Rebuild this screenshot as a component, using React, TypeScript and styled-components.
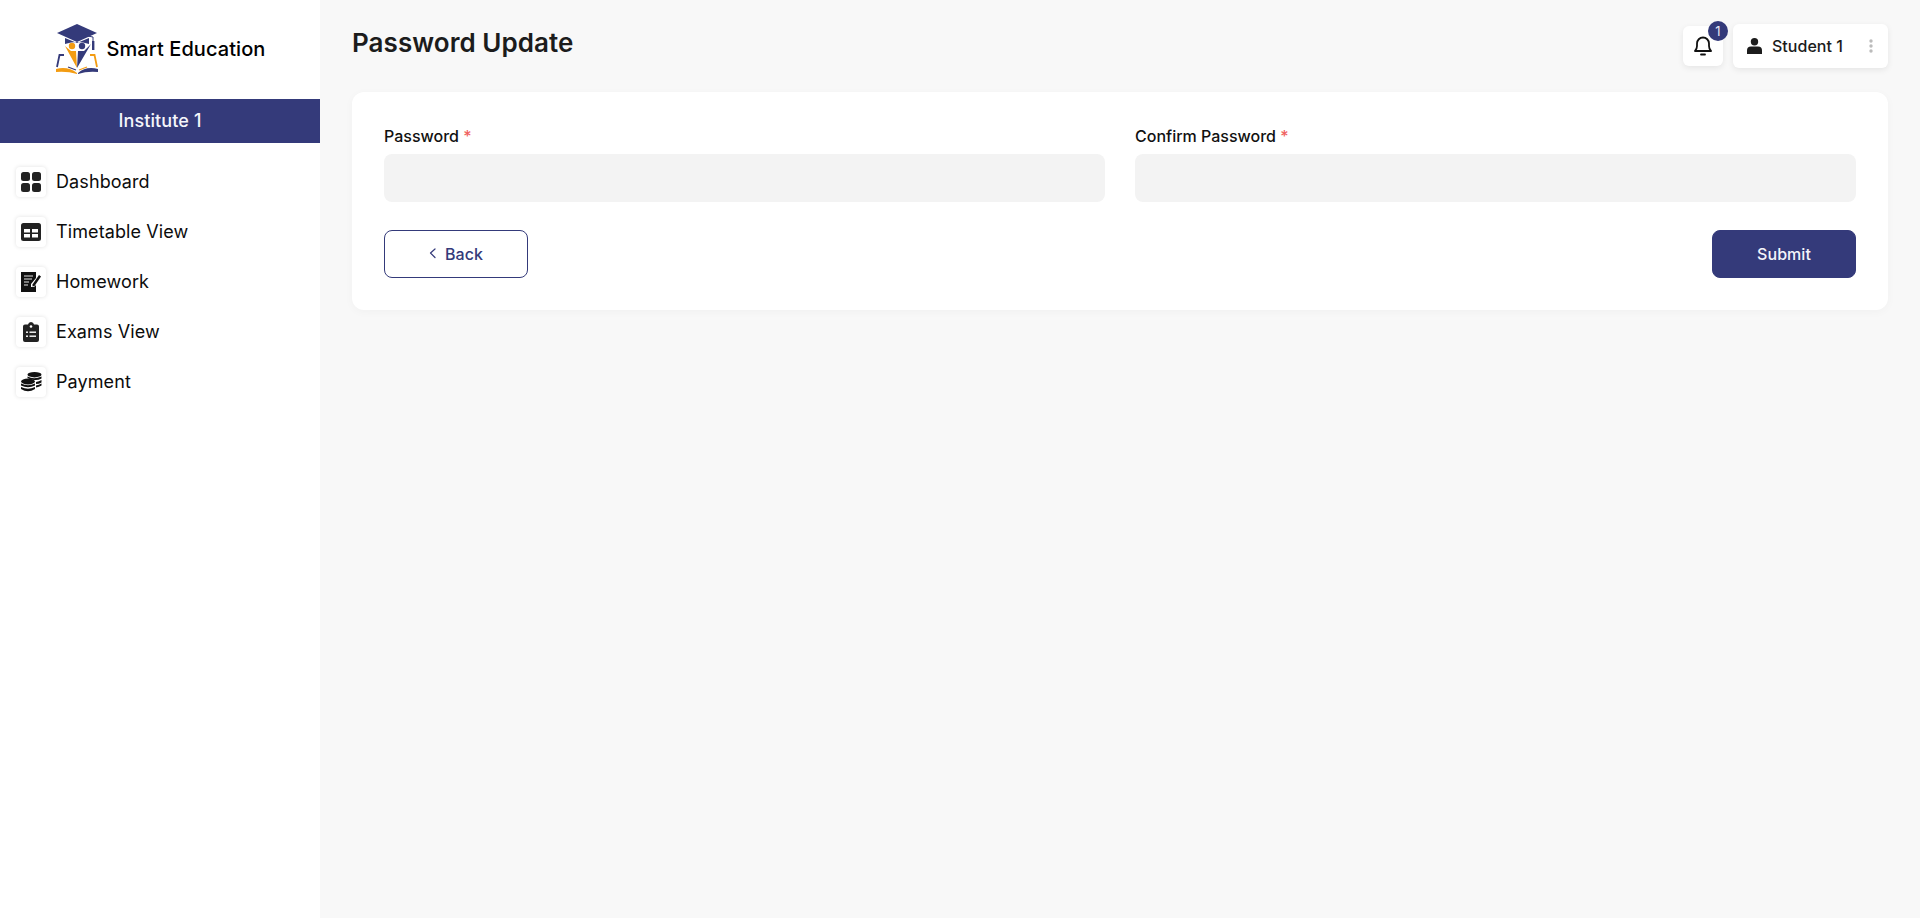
import React from "react";
import styled, { createGlobalStyle } from "styled-components";

const Global = createGlobalStyle`
  html, body { margin: 0; padding: 0; height: 100%; background: #f8f8f8; }
  * { box-sizing: border-box; }
  body { font-family: Inter, "Liberation Sans", sans-serif; color: #000; }
`;

const Shell = styled.div`
  display: flex;
  width: 1920px;
  height: 918px;
  overflow: hidden;
`;
const Sidebar = styled.aside`
  width: 320px;
  flex: none;
  background: #fff;
  display: flex;
  flex-direction: column;
`;
const Brand = styled.div`
  height: 99px;
  display: flex;
  align-items: center;
  justify-content: center;
  gap: 7px;
  padding-left: 1px;
`;
const BrandName = styled.span`
  font-size: 20px;
  font-weight: 450;
  letter-spacing: 0.08px;
  margin-top: -2px;
`;
const Institute = styled.div`
  height: 44px;
  background: #343a7a;
  color: #f4f5fb;
  font-size: 18px;
  font-weight: 450;
  letter-spacing: 0.12px;
  padding-bottom: 2px;
  display: flex;
  align-items: center;
  justify-content: center;
`;
const Menu = styled.nav`
  display: flex;
  flex-direction: column;
  gap: 20px;
  padding: 24px 16px 0;
`;
const MenuItem = styled.a`
  display: flex;
  align-items: center;
  gap: 10px;
  height: 30px;
  font-size: 18px;
  font-weight: 400;
  letter-spacing: 0.1px;
  color: #0c0c0c;
`;
const MenuLabel = styled.span`
  margin-top: -2px;
`;
const IconBox = styled.span`
  width: 30px;
  height: 30px;
  border-radius: 4px;
  background: #fff;
  box-shadow: 0 0 4px rgba(0, 0, 0, 0.12);
  display: flex;
  align-items: center;
  justify-content: center;
  flex: none;
`;
const Main = styled.main`
  flex: 1;
  min-width: 0;
  padding: 24px 32px 0;
  display: flex;
  flex-direction: column;
`;
const TopBar = styled.header`
  height: 44px;
  display: flex;
  align-items: center;
  justify-content: space-between;
  margin-bottom: 24px;
`;
const Title = styled.h1`
  margin: -7px 0 0;
  font-size: 26px;
  font-weight: 600;
  letter-spacing: 0.06px;
  color: #1c1c1c;
`;
const TopActions = styled.div`
  display: flex;
  align-items: center;
  gap: 10px;
`;
const BellBox = styled.div`
  position: relative;
  width: 40px;
  height: 40px;
  background: #fff;
  border-radius: 6px;
  box-shadow: 0 2px 6px rgba(0, 0, 0, 0.08);
  display: flex;
  align-items: center;
  justify-content: center;
`;
const Badge = styled.span`
  position: absolute;
  top: -5px;
  right: -5px;
  width: 20px;
  height: 20px;
  border-radius: 50%;
  background: #343a7a;
  color: #e8e9f5;
  font-size: 13px;
  display: flex;
  align-items: center;
  justify-content: center;
`;
const UserBox = styled.div`
  width: 155px;
  height: 44px;
  background: #fff;
  border-radius: 6px;
  box-shadow: 0 2px 6px rgba(0, 0, 0, 0.08);
  display: flex;
  align-items: center;
  padding: 0 15px 0 14px;
  gap: 10px;
`;
const UserName = styled.span`
  font-size: 16px;
  font-weight: 500;
  letter-spacing: 0.02px;
  color: #1c1c1c;
  flex: 1;
`;
const Card = styled.section`
  height: 218px;
  background: #fff;
  border-radius: 12px;
  box-shadow: 0 2px 10px rgba(0, 0, 0, 0.03);
  padding: 32px;
  display: flex;
  flex-direction: column;
`;
const Fields = styled.div`
  display: grid;
  grid-template-columns: 1fr 1fr;
  gap: 30px;
`;
const Field = styled.div`
  display: flex;
  flex-direction: column;
  gap: 8px;
`;
const Label = styled.label`
  font-size: 16px;
  font-weight: 450;
  line-height: 20px;
  padding-top: 2px;
  color: #111;
`;
const Req = styled.span`
  color: #f0625f;
`;
const Input = styled.input`
  height: 48px;
  border: 0;
  border-radius: 8px;
  background: #f3f3f3;
  outline: none;
  width: 100%;
`;
const Actions = styled.div`
  margin-top: 28px;
  display: flex;
  justify-content: space-between;
`;
const Button = styled.button<{ $primary?: boolean }>`
  width: 144px;
  height: 48px;
  border-radius: 8px;
  border: 1px solid #343a7a;
  background: ${(p) => (p.$primary ? "#343a7a" : "#fff")};
  color: ${(p) => (p.$primary ? "#f4f5fb" : "#343a7a")};
  font-family: inherit;
  font-size: 16px;
  font-weight: 450;
  letter-spacing: 0.05px;
  display: flex;
  align-items: center;
  justify-content: center;
  gap: 8px;
  padding: 0;
`;

const Logo = () => (
  <svg width="44" height="52" viewBox="0 0 44 52">
    <path d="M21 0 L41 9 L21 18 L1 9 Z" fill="#343a7a" />
    <path d="M9 14 L9 20 Q21 16 33 20 L33 14 L21 19 Z" fill="#343a7a" />
    <path d="M26 11 L37 13 L37 23" fill="none" stroke="#343a7a" strokeWidth="1" />
    <rect x="36" y="17" width="2.4" height="9" fill="#343a7a" />
    <circle cx="16" cy="22" r="3.200" fill="#f39c12" />
    <circle cx="26" cy="22" r="3.200" fill="#343a7a" />
    <path d="M9 22 L15 27 L20 27 L21 44 Z" fill="#f39c12" />
    <path d="M35 20 L28 27 L22 27 L21 44 Z" fill="#343a7a" />
    <path d="M8 31 H3.500 L1 43" fill="none" stroke="#343a7a" strokeWidth="1.800" />
    <path d="M34 31 H38.500 L41 43" fill="none" stroke="#f39c12" strokeWidth="1.800" />
    <path d="M0 45 Q12 42 21 49 L21 50 Q11 47 0 48 Z" fill="#f39c12" />
    <path d="M42 45 Q30 42 22 49 L22 50 Q31 47 42 48 Z" fill="#343a7a" />
    <path d="M20 46 L12 43" stroke="#343a7a" strokeWidth="1.200" />
    <path d="M23 46 L31 43" stroke="#f39c12" strokeWidth="1.200" />
  </svg>
);

const DashIcon = () => (
  <svg width="20" height="20" viewBox="0 0 20 20" fill="#222">
    <rect x="0" y="0" width="9" height="9" rx="2.500" />
    <rect x="11" y="0" width="9" height="9" rx="2.500" />
    <rect x="0" y="11" width="9" height="9" rx="2.500" />
    <rect x="11" y="11" width="9" height="9" rx="2.500" />
  </svg>
);
const TableIcon = () => (
  <svg width="20" height="18" viewBox="0 0 20 18">
    <rect width="20" height="18" rx="2.500" fill="#222" />
    <rect x="3" y="6" width="6" height="3.500" fill="#fff" />
    <rect x="11" y="6" width="6" height="3.500" fill="#fff" />
    <rect x="3" y="11" width="6" height="3.500" fill="#fff" />
    <rect x="11" y="11" width="6" height="3.500" fill="#fff" />
  </svg>
);
const HomeworkIcon = () => (
  <svg width="20" height="20" viewBox="0 0 20 20">
    <path d="M0 0 H15 V6 L10 12 V15 H13 L15 13 V20 H0 Z" fill="#111" />
    <path d="M3 4 H12 M3 7 H11 M3 10 H8 M3 13 H7" stroke="#fff" strokeWidth="0.900" />
    <path d="M11.500 12.500 L18 3 L20 4.500 L13.500 14 L11.500 14.500 Z" fill="#111" />
  </svg>
);
const ExamIcon = () => (
  <svg width="16" height="20" viewBox="0 0 16 20">
    <path d="M2 2.500 H5 Q5.500 0 8 0 Q10.500 0 11 2.500 H14 Q16 2.500 16 4.500 V18 Q16 20 14 20 H2 Q0 20 0 18 V4.500 Q0 2.500 2 2.500 Z" fill="#222" />
    <circle cx="8" cy="4.500" r="1.300" fill="#fff" />
    <rect x="3" y="9.500" width="2" height="1.400" fill="#fff" />
    <rect x="6.500" y="9.500" width="6.500" height="1.400" fill="#fff" />
    <rect x="3" y="13.500" width="2" height="1.400" fill="#fff" />
    <rect x="6.500" y="13.500" width="6.500" height="1.400" fill="#fff" />
  </svg>
);
const CoinsIcon = () => (
  <svg width="21" height="20" viewBox="0 0 21 20" fill="#111">
    <ellipse cx="13.500" cy="2.700" rx="7" ry="2.700" />
    <path d="M6.500 4.500 Q13 8 20.500 4.500 V6.500 Q17 8.500 13 8 Q9 7.500 6.500 6 Z" />
    <path d="M15 10 Q18 9.500 20.500 8 V10.500 Q18 12 15 12 Z" />
    <path d="M15 13.500 Q18 13 20.500 11.500 V13.500 Q18 15 15 15.500 Z" />
    <ellipse cx="7" cy="9.500" rx="7" ry="2.900" />
    <path d="M0 11.500 Q7 15 14 11.500 V13.500 Q7 17 0 13.500 Z" />
    <path d="M0 15 Q7 18.500 14 15 V17 Q7 21.500 0 17 Z" />
  </svg>
);
const BellIcon = () => (
  <svg width="18" height="20" viewBox="0 0 18 20" fill="none" stroke="#111" strokeWidth="1.800" strokeLinecap="round" strokeLinejoin="round">
    <path d="M1 15 Q3 13 3 10 V7.500 A6 6 0 0 1 15 7.500 V10 Q15 13 17 15 Z" />
    <path d="M7 18.500 H11" />
  </svg>
);
const UserIcon = () => (
  <svg width="15" height="16" viewBox="0 0 15 16" fill="#1c1c1c">
    <circle cx="7.500" cy="3.700" r="3.700" />
    <path d="M0 16 V12.500 Q0 8.500 4 8.500 H11 Q15 8.500 15 12.500 V16 Z" />
  </svg>
);
const DotsIcon = () => (
  <svg width="4" height="14" viewBox="0 0 4 14" fill="#bbb">
    <circle cx="2" cy="2" r="1.700" />
    <circle cx="2" cy="7" r="1.700" />
    <circle cx="2" cy="12" r="1.700" />
  </svg>
);
const ChevronIcon = () => (
  <svg width="8" height="12" viewBox="0 0 8 12" fill="none" stroke="#343a7a" strokeWidth="1.200" strokeLinecap="round" strokeLinejoin="round">
    <path d="M6 1 L1.500 5 L6 9.500" />
  </svg>
);

const items: [React.ReactNode, string][] = [
  [<DashIcon />, "Dashboard"],
  [<TableIcon />, "Timetable View"],
  [<HomeworkIcon />, "Homework"],
  [<ExamIcon />, "Exams View"],
  [<CoinsIcon />, "Payment"],
];

export default function App() {
  return (
    <Shell>
      <Global />
      <Sidebar>
        <Brand>
          <Logo />
          <BrandName>Smart Education</BrandName>
        </Brand>
        <Institute>Institute 1</Institute>
        <Menu>
          {items.map(([icon, label]) => (
            <MenuItem key={label}>
              <IconBox>{icon}</IconBox>
              <MenuLabel>{label}</MenuLabel>
            </MenuItem>
          ))}
        </Menu>
      </Sidebar>
      <Main>
        <TopBar>
          <Title>Password Update</Title>
          <TopActions>
            <BellBox>
              <BellIcon />
              <Badge>1</Badge>
            </BellBox>
            <UserBox>
              <UserIcon />
              <UserName>Student 1</UserName>
              <DotsIcon />
            </UserBox>
          </TopActions>
        </TopBar>
        <Card>
          <Fields>
            <Field>
              <Label>Password <Req>*</Req></Label>
              <Input type="password" />
            </Field>
            <Field>
              <Label>Confirm Password <Req>*</Req></Label>
              <Input type="password" />
            </Field>
          </Fields>
          <Actions>
            <Button>
              <ChevronIcon />
              Back
            </Button>
            <Button $primary>Submit</Button>
          </Actions>
        </Card>
      </Main>
    </Shell>
  );
}
